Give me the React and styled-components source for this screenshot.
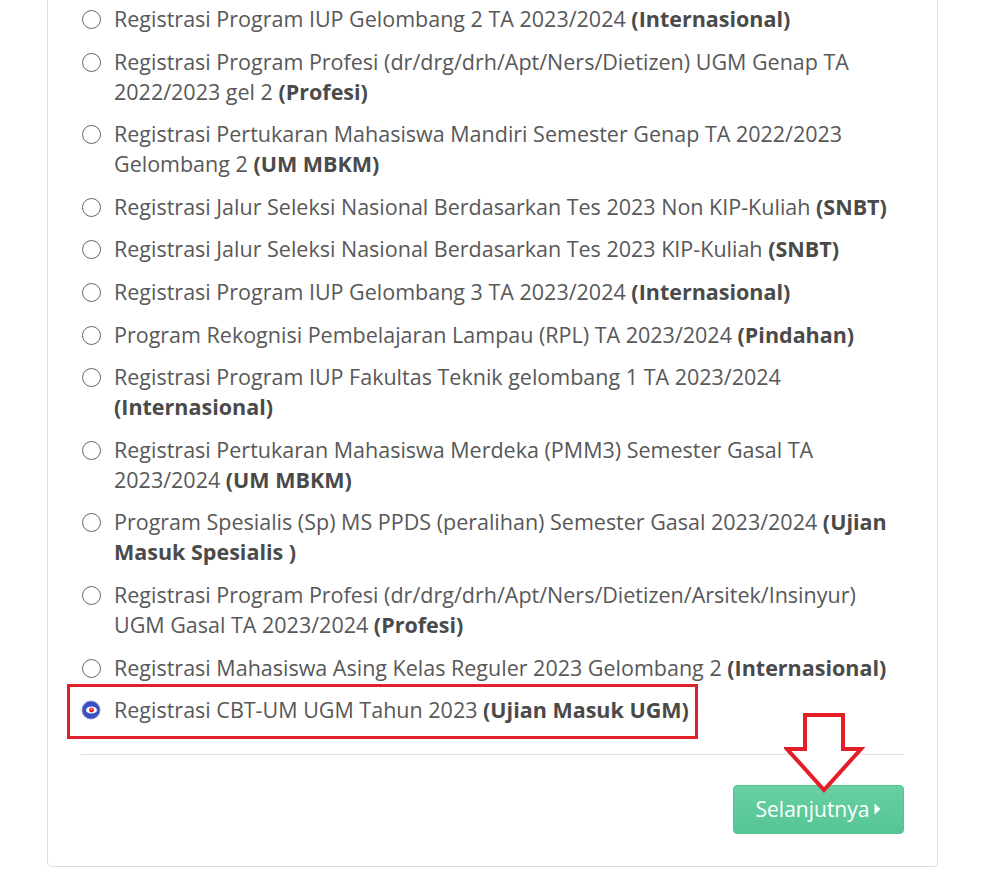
import React, { useState } from "react";
import styled, { createGlobalStyle } from "styled-components";

const GlobalStyle = createGlobalStyle`
  html, body {
    margin: 0;
    padding: 0;
    background: #fff;
  }
  body {
    font-family: "Open Sans", "Liberation Sans", sans-serif;
  }
`;

const Page = styled.div`
  width: 988px;
  height: 878px;
  overflow: hidden;
  position: relative;
`;

const Card = styled.div`
  margin-left: 47px;
  width: 891px;
  box-sizing: border-box;
  border: 1px solid #dcdcdc;
  border-top: none;
  border-radius: 0 0 5px 5px;
  padding: 4px 33px 32px 33px;
`;

const List = styled.div`
  display: flex;
  flex-direction: column;
  gap: 12.6px;
`;

const Option = styled.label`
  position: relative;
  display: flex;
  align-items: flex-start;
  font-size: 21.5px;
  line-height: 30px;
  color: #585858;
  cursor: pointer;
`;

const RadioDot = styled.span`
  flex: none;
  width: 19px;
  height: 19px;
  margin: 6px 13px 0 1px;
  box-sizing: border-box;
  border: 1.6px solid #666;
  border-radius: 50%;
`;

const CheckedDot = styled.svg`
  flex: none;
  width: 20px;
  height: 20px;
  margin: 5px 13px 0 0;
`;

const Label = styled.span`
  b {
    color: #4a4a4a;
    font-weight: 700;
  }
`;

const Highlight = styled.span`
  position: absolute;
  left: -14px;
  top: -11px;
  width: 631px;
  height: 55px;
  box-sizing: border-box;
  border: 3.5px solid #e0212b;
  pointer-events: none;
`;

const Divider = styled.hr`
  border: none;
  border-top: 1px solid #dedede;
  margin: 29px 0 30px;
`;

const Footer = styled.div`
  display: flex;
  justify-content: flex-end;
`;

const NextButton = styled.button`
  display: flex;
  align-items: center;
  gap: 5px;
  width: 171px;
  height: 49px;
  justify-content: center;
  border: 1px solid #55c391;
  border-radius: 4px;
  background: linear-gradient(#67d0a4, #55c594);
  color: #fff;
  font-family: "Open Sans", "Liberation Sans", sans-serif;
  font-size: 21px;
  padding: 0 0 2px 0;
  cursor: pointer;
`;

const Arrow = styled.svg`
  position: absolute;
  left: 784px;
  top: 712px;
  width: 82px;
  height: 82px;
  pointer-events: none;
`;

const options = [
  ["Registrasi Program IUP Gelombang 2 TA 2023/2024", "(Internasional)"],
  ["Registrasi Program Profesi (dr/drg/drh/Apt/Ners/Dietizen) UGM Genap TA 2022/2023 gel 2", "(Profesi)"],
  ["Registrasi Pertukaran Mahasiswa Mandiri Semester Genap TA 2022/2023 Gelombang 2", "(UM MBKM)"],
  ["Registrasi Jalur Seleksi Nasional Berdasarkan Tes 2023 Non KIP-Kuliah", "(SNBT)"],
  ["Registrasi Jalur Seleksi Nasional Berdasarkan Tes 2023 KIP-Kuliah", "(SNBT)"],
  ["Registrasi Program IUP Gelombang 3 TA 2023/2024", "(Internasional)"],
  ["Program Rekognisi Pembelajaran Lampau (RPL) TA 2023/2024", "(Pindahan)"],
  ["Registrasi Program IUP Fakultas Teknik gelombang 1 TA 2023/2024", "(Internasional)"],
  ["Registrasi Pertukaran Mahasiswa Merdeka (PMM3) Semester Gasal TA 2023/2024", "(UM MBKM)"],
  ["Program Spesialis (Sp) MS PPDS (peralihan) Semester Gasal 2023/2024", "(Ujian Masuk Spesialis )"],
  ["Registrasi Program Profesi (dr/drg/drh/Apt/Ners/Dietizen/Arsitek/Insinyur) UGM Gasal TA 2023/2024", "(Profesi)"],
  ["Registrasi Mahasiswa Asing Kelas Reguler 2023 Gelombang 2", "(Internasional)"],
  ["Registrasi CBT-UM UGM Tahun 2023", "(Ujian Masuk UGM)"],
];

function SelectedRadio() {
  return (
    <CheckedDot viewBox="0 0 20 20">
      <circle cx="10" cy="10" r="9" fill="#3b4fc4" stroke="#8a93c9" strokeWidth="1" />
      <ellipse cx="10.5" cy="10" rx="5.5" ry="3.6" fill="#fff" />
      <circle cx="10.5" cy="10" r="2.4" fill="#e02020" />
      <circle cx="10.5" cy="9" r="0.8" fill="#fff" />
    </CheckedDot>
  );
}

export default function App() {
  const [selected, setSelected] = useState(options.length - 1);
  return (
    <Page>
      <GlobalStyle />
      <Card>
        <List>
          {options.map(([text, tag], i) => (
            <Option key={i} onClick={() => setSelected(i)}>
              {selected === i ? <SelectedRadio /> : <RadioDot />}
              <Label>
                {text} <b>{tag}</b>
              </Label>
              {i === options.length - 1 && <Highlight />}
            </Option>
          ))}
        </List>
        <Divider />
        <Footer>
          <NextButton>
            Selanjutnya
            <svg width="7" height="12" viewBox="0 0 7 12">
              <path d="M0.5 0.5 L6.5 6 L0.5 11.5 Z" fill="#fff" />
            </svg>
          </NextButton>
        </Footer>
      </Card>
      <Arrow viewBox="0 0 82 82">
        <path
          d="M21 3 H59 V37 H77 L40 78 L3 37 H21 Z"
          fill="#fff"
          stroke="#e31e26"
          strokeWidth="4"
          strokeLinejoin="miter"
        />
      </Arrow>
    </Page>
  );
}
